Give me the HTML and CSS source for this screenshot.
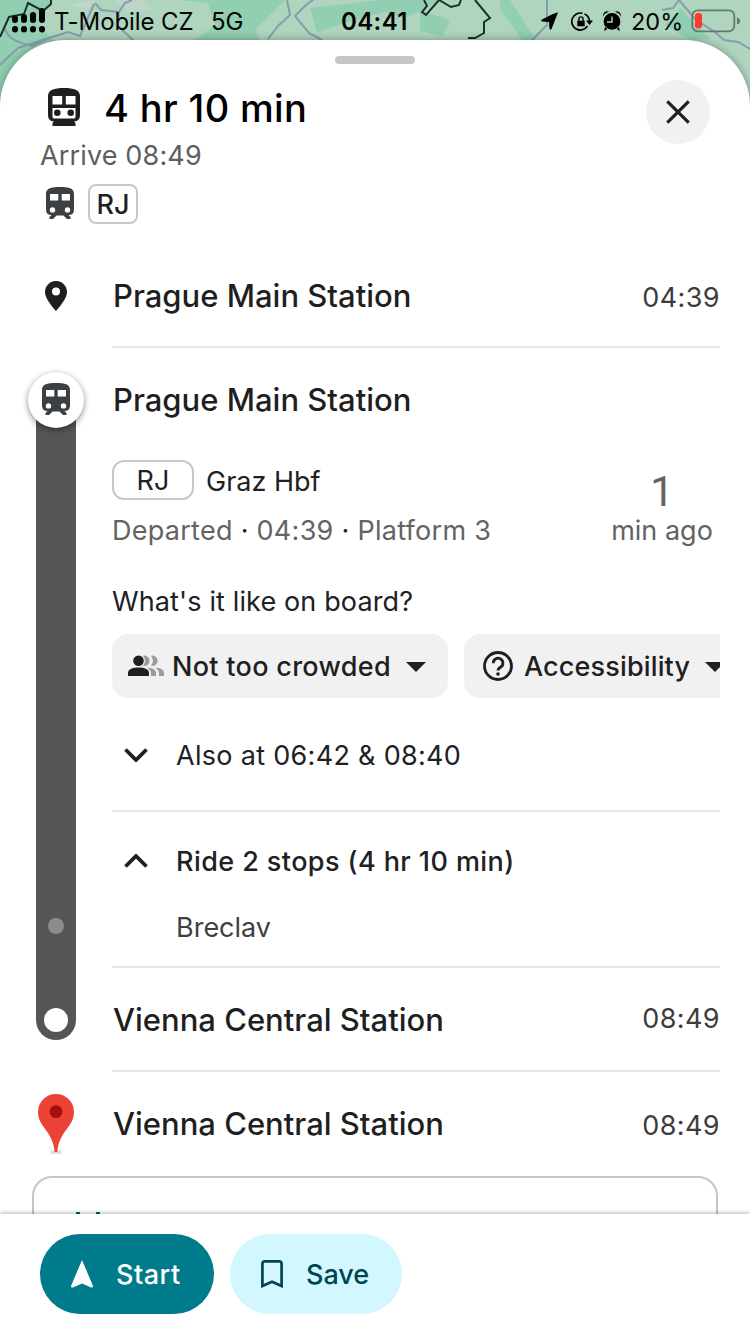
FILE: index.html
```html
<!DOCTYPE html>
<html lang="en">
<head>
<meta charset="utf-8">
<meta name="viewport" content="width=device-width">
<title>Trip details</title>
<link rel="stylesheet" href="styles.css">
</head>
<body>
<svg width="0" height="0" class="defs">
  <symbol id="train" viewBox="0 0 28 32">
    <path fill-rule="evenodd" d="M14 0C5 0 0 1 0 7V22.500Q0 28 5.500 28L3.500 30V32H7L10.500 28.500H17.500L21 32H24.500V30L22.500 28Q28 28 28 22.500V7C28 1 23 0 14 0ZM4 7H12.300V13.500H4ZM15.700 7H24V13.500H15.700ZM6.500 20.200A2.700 2.700 0 1 1 6.500 25.600A2.700 2.700 0 1 1 6.500 20.200ZM21.500 20.200A2.700 2.700 0 1 1 21.500 25.600A2.700 2.700 0 1 1 21.500 20.200Z"/>
  </symbol>
</svg>
<div class="screen">
  <svg class="map" viewBox="0 0 750 150">
    <rect width="750" height="150" fill="#afd5bf"/>
    <path fill="#92ceb1" d="M0 0H52L37 24 55 42 70 38 55 52 20 82 0 90ZM135 0H285L272 13 255 30 260 40H195L215 25 208 3 180 0ZM310 8 380 0H442L405 18 385 12 345 23 317 32ZM420 10 450 20 443 36 420 31ZM510 0 536 40H522L500 8V0ZM680 8 710 39 690 40 665 25ZM0 80 20 60V150H0Z"/>
    <path fill="#c0d4ca" d="M70 5 95 0 88 10ZM115 0H140L155 10 128 12Z"/>
    <g fill="none" stroke="#869daf" stroke-width="2">
      <path d="M5 29C10 43 25 43 32 46L49 38 68 32 80 36 94 4M0 65 18 48 49 38M95 3 101 10 119 12 125 3 132 0M119 12 118 26 133 40M268 39 278 26 290 15 287 0M295 16 306 5 313 0M295 16 309 33 322 40M547 0V25L532 40M662 10 673 8 679 0 696 20 715 32 724 40 738 42 750 49"/>
    </g>
    <path fill="none" stroke="#1d2f28" stroke-width="2" d="M0 37 9 17 24 14 28 3 43 11 51 4V0M424 0 427 6 422 12 426 15 439 0 451 7 459 5 461 0M475 0 490 18 484 22V33L475 38H468"/>
  </svg>
  <header class="status">
    <svg class="signal" viewBox="0 0 34 22"><path fill="none" stroke="#050505" stroke-width="6" stroke-linecap="round" d="M3 7.500V9M12 6V9M21 4V9M30 0V9M3 18V18.500M12 18V18.500M21 18V18.500M30 18V18.500"/></svg>
    <span class="carrier">T-Mobile CZ</span><span class="net">5G</span>
    <span class="clock">04:41</span>
    <svg class="sys" viewBox="0 0 60 22">
      <path d="M17 0.500Q15 0 1 7.500Q-.5 9 1 9.500L8 10 8.500 17Q9.500 18.500 10.500 17Z"/>
      <g transform="translate(30 0)"><path fill="none" stroke="#000" stroke-width="1.700" d="M11.500 1.300A8.500 8.500 0 1 0 16.500 14M13.500 2A8.500 8.500 0 0 1 18.500 9"/><path d="M15 8.500H22L18.500 13ZM6.300 8.800H13.700V14.300H6.300Z"/><path fill="none" stroke="#000" stroke-width="1.400" d="M7.900 9V7A2.100 2.100 0 0 1 12.100 7V9"/></g>
    </svg>
    <svg class="alarm" viewBox="0 0 20 20"><path d="M10 2A8.400 8.400 0 1 1 10 18.800A8.400 8.400 0 1 1 10 2ZM1 4.500Q2-.5 7 .5Q3 2 1 5.500ZM19 4.500Q18-.5 13 .5Q17 2 19 5.500ZM3 16 5.500 18 2 20ZM17 16 14.500 18 18 20Z"/><path d="M10 5.500V11H5" fill="none" stroke="#afd5bf" stroke-width="1.400"/></svg>
    <span class="pct">20%</span>
    <svg class="battery" viewBox="0 0 50 24"><rect x="1.300" y="1.300" width="42" height="21" rx="5.500" fill="none" stroke="#66776e" stroke-width="1.800"/><rect x="4" y="4" width="7" height="15.500" rx="3" fill="#f93b30"/><path fill="#66776e" d="M46 8.500Q49 9 49 12T46 15.500Z"/></svg>
  </header>

  <main class="sheet">
    <div class="handle"></div>
    <section class="summary">
      <div class="summary-text">
        <div class="title-row">
          <svg class="title-icon" viewBox="0 0 32 38"><path fill-rule="evenodd" d="M16 0C6 0 0 2 0 8V27Q0 33 6 33.500L4.500 35V38H27.500V35L26 33.500Q32 33 32 27V8C32 2 26 0 16 0ZM4.500 8H14.200V16.500H4.500ZM17.800 8H27.500V16.500H17.800ZM4.500 20H27.500V29Q27.500 30.500 26 30.500H6Q4.500 30.500 4.500 29Z"/><circle cx="9.300" cy="24.800" r="3.300"/><circle cx="22.700" cy="24.800" r="3.300"/></svg>
          <h1>4 hr 10 min</h1>
        </div>
        <p class="arrive">Arrive 08:49</p>
        <div class="lines"><svg class="train"><use href="#train"/></svg><span class="badge small">RJ</span></div>
      </div>
      <button class="close"><svg viewBox="0 0 24 24"><path d="M1.300 1.300 22.700 22.700M22.700 1.300 1.300 22.700"/></svg></button>
    </section>

    <section class="stop">
      <div class="rail"><svg class="pin" viewBox="0 0 22 30"><path fill-rule="evenodd" d="M11 0A11 11 0 0 0 0 11C0 18.500 11 30 11 30S22 18.500 22 11A11 11 0 0 0 11 0ZM11 6.500A4 4 0 1 1 11 14.500A4 4 0 1 1 11 6.500Z"/></svg></div>
      <div class="row line"><h2>Prague Main Station</h2><time class="down">04:39</time></div>
    </section>

    <section class="leg">
      <div class="rail track">
        <span class="node"><svg class="train"><use href="#train"/></svg></span>
        <span class="bar"><i class="via"></i><i class="end"></i></span>
      </div>
      <div class="leg-body">
        <div class="row"><h2 class="board">Prague Main Station</h2></div>
        <div class="departure">
          <div class="service">
            <div class="service-name"><span class="badge wide">RJ</span><span class="dest">Graz Hbf</span></div>
            <p class="departed">Departed <b>·</b> 04:39 <b>·</b> Platform 3</p>
          </div>
          <div class="ago"><strong>1</strong><span>min ago</span></div>
        </div>
        <p class="question">What's it like on board?</p>
        <div class="chips">
          <div class="chip crowd">
            <svg class="people" viewBox="0 0 36 22"><g fill="#9b9b9b"><path d="M15 .8A5.200 5.200 0 1 1 15 10.800Q19 5.800 15 .8ZM23 .8A5.200 5.200 0 1 1 23 10.800Q27 5.800 23 .8ZM19 12.500Q28 13 28 18V21H23V18Q23 15 19 12.500ZM27 12.500Q36 13 36 18V21H31V18Q31 15 27 12.500Z"/></g><path d="M0 21V18Q0 12.500 10.500 12.500T21 18V21Z"/><circle cx="10.500" cy="5.800" r="5.300"/></svg>
            <span>Not too crowded</span><i class="caret"></i>
          </div>
          <div class="chip access">
            <svg class="help" viewBox="0 0 30 30"><circle cx="15" cy="15" r="13.500"/><path d="M10.300 12.200A4.800 4.800 0 1 1 17.800 16Q15 17.600 15 19.500"/><circle class="dot" cx="15" cy="23" r="1.800"/></svg>
            <span>Accessibility</span><i class="caret"></i>
          </div>
        </div>
        <div class="more line"><svg class="chev" viewBox="0 0 24 14"><path d="M1.500 1.500 12 12 22.500 1.500"/></svg><span class="also">Also at 06:42 &amp; 08:40</span></div>
        <div class="ride"><svg class="chev" viewBox="0 0 24 14"><path d="M1.500 12.500 12 2 22.500 12.500"/></svg><span class="stops">Ride 2 stops (4 hr 10 min)</span></div>
        <div class="via-name line">Breclav</div>
        <div class="row line"><h2 class="vienna">Vienna Central Station</h2><time class="up">08:49</time></div>
      </div>
    </section>

    <section class="stop">
      <div class="rail"><svg class="marker" viewBox="0 0 36 60"><ellipse cx="18" cy="58" rx="6" ry="2" fill="#ddd"/><path fill="#ea4335" d="M18 0A18 18 0 0 0 0 18C0 33 15 37 16.700 58H19.300C21 37 36 33 36 18A18 18 0 0 0 18 0Z"/><circle cx="18" cy="17.600" r="6.400" fill="#a50e0e"/></svg></div>
      <div class="row"><h2 class="vienna board">Vienna Central Station</h2><time class="arrival">08:49</time></div>
    </section>
    <div class="card"><i></i><i></i></div>
  </main>

  <footer class="actions">
    <button class="start"><svg viewBox="0 0 22 28"><path d="M11 0 22 26Q22 28 20 27.500L11 23.500 2 27.500Q0 28 0 26Z"/></svg><span>Start</span></button>
    <button class="save"><svg viewBox="0 0 22 28"><path d="M1.400 26V4Q1.400 1.400 4 1.400H18Q20.600 1.400 20.600 4V26L11 21.800Z"/></svg><span>Save</span></button>
  </footer>
</div>
</body>
</html>
```
FILE: styles.css
```css
* { box-sizing: border-box; }
body { margin: 0; font-family: Inter, "Liberation Sans", sans-serif; color: #202124; background: #fff; }
h1, h2, p { margin: 0; font-weight: 500; }
button { border: 0; padding: 0; font: inherit; }
svg { display: block; flex: none; }
span, time, h1, h2, p { white-space: nowrap; }
.defs { position: absolute; }
.screen { width: 750px; height: 1334px; display: flex; flex-direction: column; position: relative; overflow: hidden; }
.map { position: absolute; top: 0; left: 0; width: 750px; height: 150px; }

.status { position: relative; height: 40px; flex: none; display: grid; grid-template-columns: 54px 157px 130px 200px 61px 29px 60px 50px; align-items: center; color: #050505; font-size: 24px; line-height: 40px; }
.status span { padding-top: 2px; }
.signal { width: 34px; height: 22px; margin: 2px 0 0 12px; overflow: visible; }
.carrier { letter-spacing: -0.1px; }
.clock { font-weight: 600; letter-spacing: 0.4px; }
.pct { font-size: 23.5px; }
.sys { width: 60px; height: 22px; margin: 3px 0 0 0; }
.alarm { width: 20px; height: 20px; }
.battery { width: 50px; height: 24px; }

.sheet { position: relative; height: 1174px; flex: none; overflow: hidden; background: #fff; border-radius: 66px 66px 0 0; box-shadow: 0 0 8px rgba(0,0,0,.35); }
.handle { width: 80px; height: 8px; margin: 16px auto 0; border-radius: 4px; background: #c6c6c6; }
.summary { height: 180px; display: flex; justify-content: space-between; padding: 16px 40px 0; }
.title-row { height: 56px; display: flex; align-items: center; padding-left: 8px; }
.title-icon { width: 32px; height: 38px; fill: #1f1f1f; margin: -2px 24px 0 0; }
h1 { font-size: 38px; line-height: 56px; color: #000; letter-spacing: 0.35px; }
.arrive { font-size: 27px; font-weight: 400; line-height: 40px; height: 38px; color: #5e5e5e; letter-spacing: 0.15px; }
.lines { display: flex; align-items: center; gap: 14px; padding-left: 6px; margin-top: 10px; }
.train { width: 28px; height: 32px; fill: #3c4043; }
.lines .train { margin-top: -2px; }
.badge { display: flex; align-items: center; justify-content: center; height: 40px; border: 2px solid #c8c8c8; border-radius: 8px; font-size: 27px; }
.small { width: 50px; font-weight: 500; }
.wide { width: 82px; border-radius: 12px; }
.close { width: 64px; height: 64px; border-radius: 50%; background: #f1f1f1; display: grid; place-items: center; }
.close svg { width: 24px; height: 24px; fill: none; stroke: #1f1f1f; stroke-width: 3.2; }

.stop, .leg { display: grid; grid-template-columns: 112px 608px; }
.rail { display: flex; flex-direction: column; align-items: center; }
.stop .rail { justify-content: center; }
.pin { width: 22px; height: 30px; fill: #1f1f1f; }
.marker { width: 36px; height: 60px; }
.row { height: 104px; display: flex; align-items: center; justify-content: space-between; }
.line { border-bottom: 2px solid #e6e6e6; }
h2 { font-size: 31px; line-height: 40px; color: #1f1f1f; padding: 2px 0 0 1px; }
.board { padding-top: 0; }
time { font-size: 27px; color: #3c3c3c; letter-spacing: 0.4px; }
.up { padding-bottom: 2px; }
.down { padding-top: 4px; }
.arrival { padding-top: 3px; }

.track { padding-top: 24px; height: 724px; }
.node { position: relative; width: 56px; height: 56px; border-radius: 50%; background: #fff; display: grid; place-items: center; padding-bottom: 2px; box-shadow: 0 2px 6px rgba(0,0,0,.45); z-index: 1; }
.bar { width: 40px; height: 640px; margin-top: -28px; border-radius: 0 0 20px 20px; background: #555; display: flex; flex-direction: column; align-items: center; justify-content: flex-end; padding-bottom: 8px; gap: 74px; }
.via { width: 16px; height: 16px; border-radius: 50%; background: #8c8c8c; }
.end { width: 24px; height: 24px; border-radius: 50%; background: #fff; }

.leg-body { min-width: 0; }
.departure { display: flex; justify-content: space-between; height: 124px; padding-top: 8px; }
.service-name { display: flex; align-items: center; gap: 12px; }
.dest { font-size: 27px; padding-top: 2px; }
.departed { font-size: 27px; line-height: 40px; font-weight: 400; color: #636363; margin-top: 11px; letter-spacing: 0.27px; }
.departed b { font-weight: 400; color: #222; }
.ago { width: 116px; text-align: center; color: #636363; font-size: 27px; display: flex; flex-direction: column; padding-top: 12px; }
.ago strong { font-family: Roboto, sans-serif; font-size: 42px; font-weight: 400; line-height: 40px; }
.ago span { line-height: 38px; }
.question { height: 58px; font-size: 27px; font-weight: 400; line-height: 52px; letter-spacing: 0.13px; }
.chips { display: flex; gap: 16px; overflow: hidden; height: 64px; }
.chip { flex: none; height: 64px; border-radius: 16px; background: #f1f1f1; display: flex; align-items: center; font-size: 27px; font-weight: 500; color: #1f1f1f; }
.crowd { width: 336px; padding-left: 16px; letter-spacing: 0.3px; }
.people { width: 36px; height: 22px; margin-right: 8px; fill: #1f1f1f; }
.access { width: 290px; padding-left: 19px; letter-spacing: 0.15px; }
.help { width: 30px; height: 30px; margin-right: 11px; fill: none; stroke: #1f1f1f; stroke-width: 2.8; }
.help .dot { fill: #1f1f1f; stroke: none; }
.caret { margin: 2px 0 0 15px; border: 10px solid transparent; border-top-color: #1f1f1f; border-bottom: 0; }
.more { height: 114px; }
.ride { height: 98px; }
.more, .ride { display: flex; align-items: center; padding-left: 12px; font-size: 27px; }
.more { padding-top: 2px; }
.chev { width: 24px; height: 14px; margin-right: 28px; fill: none; stroke: #1f1f1f; stroke-width: 3.8; }
.also { letter-spacing: 0.3px; }
.stops { font-weight: 500; letter-spacing: 0.42px; }
.via-name { height: 58px; padding-left: 64px; font-size: 27px; line-height: 35px; color: #3f3f3f; }

.card { height: 100px; margin: 0 32px; border: 2px solid #c6c6c6; border-radius: 20px; display: flex; gap: 16px; padding: 34px 0 0 42px; }
.card i { width: 4px; height: 4px; background: #006a6a; }

.actions { position: relative; height: 120px; flex: none; background: #fff; display: flex; gap: 16px; padding: 20px 40px; box-shadow: 0 -1px 4px rgba(0,0,0,.3); }
.actions button { height: 80px; border-radius: 40px; display: flex; align-items: center; padding-left: 31px; font-size: 27px; font-weight: 500; }
.actions svg { width: 22px; height: 28px; }
.start { width: 174px; background: #007b8b; color: #fff; fill: #fff; gap: 23px; letter-spacing: 0.5px; }
.save { width: 172px; background: #d2f7ff; color: #004652; gap: 23px; }
.save svg { fill: none; stroke: #004652; stroke-width: 2.7; }
```
